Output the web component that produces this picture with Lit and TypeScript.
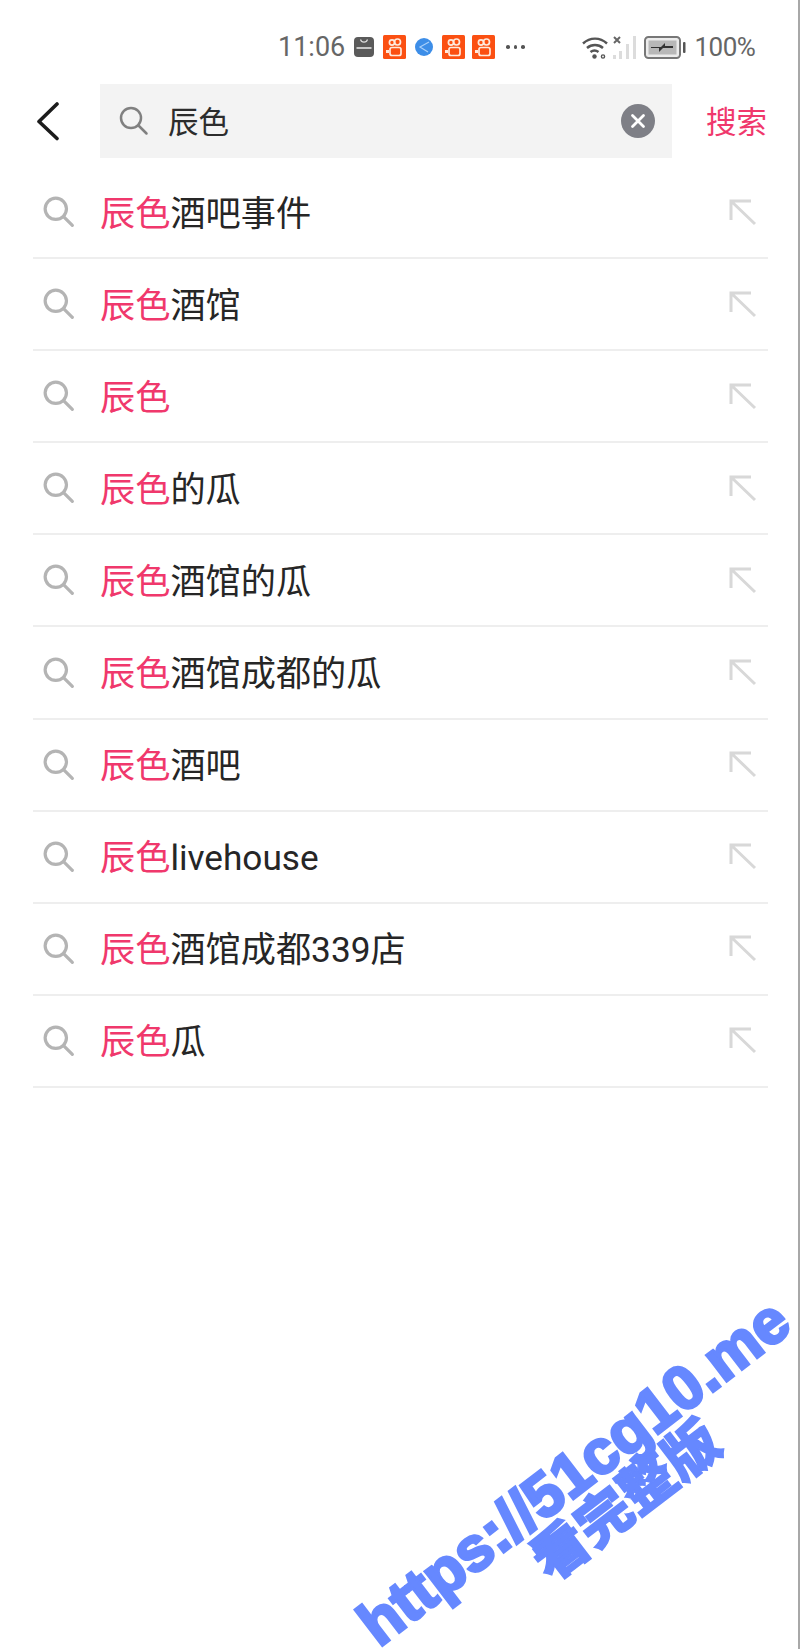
import { LitElement, html, css, svg } from 'lit';
import { customElement } from 'lit/decorators.js';

const ROWS = ['酒吧事件', '酒馆', '', '的瓜', '酒馆的瓜', '酒馆成都的瓜', '酒吧', 'livehouse', '酒馆成都339店', '瓜'];

const orangeApp = html`<svg class="orange" viewBox="0 0 23 24">
  <rect width="23" height="24" rx="1.5" fill="#fb5012" />
  <g fill="none" stroke="#ffe9dc" stroke-width="1.7">
    <circle cx="9" cy="7.500" r="2.600" /><circle cx="14.500" cy="7" r="3" />
    <rect x="7" y="12.500" width="11" height="8" rx="2" />
  </g>
  <path d="M3 15h3v3H3z" fill="#ffe9dc" />
</svg>`;

@customElement('app-root')
export class AppRoot extends LitElement {
  static styles = css`
    :host {
      display: block;
      position: relative;
      width: 800px;
      height: 1649px;
      overflow: hidden;
      background: #fff;
      font-family: 'Noto Sans CJK SC', 'Noto Sans', sans-serif;
      color: #222;
    }

    .edge {
      position: absolute;
      top: 0;
      right: 0;
      width: 2px;
      height: 100%;
      background: #a8a8a8;
    }

    .status {
      display: flex;
      align-items: center;
      height: 30px;
      padding: 32px 0 0 278px;
      color: #666;
      font-family: Roboto, sans-serif;
      font-size: 26px;
    }

    .time {
      width: 76px;
      font-size: 27px;
    }

    .store {
      width: 20px;
      height: 20px;
      margin-right: 9px;
    }

    .orange {
      width: 23px;
      height: 24px;
      margin-right: 7px;
      flex: none;
    }

    .globe {
      width: 18px;
      height: 18px;
      margin: 0 9px 0 2px;
    }

    .dots {
      display: flex;
      gap: 4px;
      margin: 0 57px 0 4px;
    }

    .dots i {
      width: 3.500px;
      height: 3.500px;
      border-radius: 50%;
      background: #555;
    }

    .wifi {
      width: 26px;
      height: 23px;
    }

    .signal {
      width: 24px;
      height: 23px;
      margin-left: 5px;
    }

    .battery {
      width: 42px;
      height: 23px;
      margin-left: 7px;
    }

    .pct {
      margin-left: 9px;
      letter-spacing: -0.5px;
    }

    .search {
      display: flex;
      align-items: center;
      margin-top: 22px;
      height: 74px;
    }

    .back {
      width: 24px;
      height: 40px;
      margin-left: 36px;
      flex: none;
    }

    .box {
      display: flex;
      align-items: center;
      box-sizing: border-box;
      width: 572px;
      height: 74px;
      margin-left: 40px;
      padding: 0 17px 0 19px;
      background: #f3f3f3;
      font-size: 30.500px;
    }

    .box .mag {
      width: 30px;
      height: 30px;
      flex: none;
    }

    .box span {
      flex: 1;
      margin-left: 19px;
      padding-bottom: 2px;
      color: #2c2c2c;
    }

    .clear {
      width: 34px;
      height: 34px;
      flex: none;
    }

    .go {
      margin-left: 34px;
      padding-bottom: 2px;
      color: #f0386c;
      font-size: 30.500px;
    }

    .list {
      margin: 9px 32px 0 33px;
    }

    .row {
      display: flex;
      align-items: center;
      box-sizing: border-box;
      height: 92.100px;
      padding: 0 11px 0 10px;
      border-bottom: 2px solid #eeeeee;
      font-family: Roboto, 'Noto Sans CJK SC', sans-serif;
      font-size: 35.200px;
    }

    .row .mag {
      width: 32px;
      height: 32px;
      flex: none;
    }

    .text {
      flex: 1;
      margin-left: 25px;
      padding-bottom: 4px;
      color: #262626;
      white-space: nowrap;
    }

    .text em {
      font-style: normal;
      color: #f0386c;
    }

    .arrow {
      width: 28px;
      height: 27px;
      flex: none;
    }

    .mark {
      position: absolute;
      color: #6688ff;
      white-space: nowrap;
    }

    .url {
      left: 270px;
      top: 1452px;
      font-family: 'Liberation Sans', sans-serif;
      font-weight: 700;
      font-size: 62px;
      line-height: 40px;
      -webkit-text-stroke: 3px #6688ff;
      transform: translateX(42px) rotate(-37.500deg);
    }

    .sub {
      left: 536px;
      top: 1536px;
      font-family: 'Noto Sans CJK SC', sans-serif;
      font-weight: 900;
      font-size: 55px;
      line-height: 56px;
      -webkit-text-stroke: 1.500px #6688ff;
      transform: rotate(-37.500deg);
      transform-origin: 0 50%;
    }
  `;

  searchIcon(color: string, weight: number) {
    return svg`
      <circle cx="12" cy="12" r="10" fill="none" stroke=${color} stroke-width=${weight} />
      <path d="M19.500 19.500l8 8" fill="none" stroke=${color} stroke-width=${weight} stroke-linecap="round" />`;
  }

  render() {
    return html`
      <div class="status">
        <span class="time">11:06</span>
        <svg class="store" viewBox="0 0 20 20">
          <rect width="20" height="20" rx="4" fill="#5a5a5a" />
          <path d="M6.500 2.500c1 3.500 6 3.500 7 0" fill="none" stroke="#ddd" stroke-width="1.200" />
          <rect x="2.500" y="10" width="15" height="2" fill="#c8c8c8" />
        </svg>
        ${orangeApp}
        <svg class="globe" viewBox="0 0 18 18">
          <circle cx="9" cy="9" r="9" fill="#3d8ee8" />
          <path d="M14 4L5 9l8 5" fill="none" stroke="#a9d0fa" stroke-width="1.200" />
        </svg>
        ${orangeApp}${orangeApp}
        <div class="dots"><i></i><i></i><i></i></div>
        <svg class="wifi" viewBox="0 0 26 23" fill="none" stroke="#555" stroke-width="2.400">
          <path d="M1 7.500c7-6.500 17-6.500 24 0M5 12c4.500-4 11.500-4 16 0M8.500 16c2.500-2 5.500-2 8 0" />
          <circle cx="12.500" cy="20.500" r="2.200" fill="#555" stroke="none" />
          <circle cx="21" cy="20.500" r="1.600" stroke-width="1.400" />
        </svg>
        <svg class="signal" viewBox="0 0 24 23">
          <path d="M1 1l6 6M7 1L1 7" stroke="#666" stroke-width="2" />
          <g fill="#dcdcdc">
            <rect x="0" y="19" width="3" height="4" /><rect x="6" y="15" width="3" height="8" />
            <rect x="13" y="8" width="3" height="15" /><rect x="20" y="0" width="3" height="23" />
          </g>
        </svg>
        <svg class="battery" viewBox="0 0 42 23">
          <rect x="1" y="1" width="35" height="21" rx="3.500" fill="#ececec" stroke="#777" stroke-width="2" />
          <rect x="4.500" y="4.500" width="28" height="14" fill="#b8b8b8" />
          <path d="M7 11h10l4-4v3h8v2H19l-4 4v-4H7z" fill="#333" />
          <rect x="39" y="6" width="2.500" height="11" rx="1" fill="#555" />
        </svg>
        <span class="pct">100%</span>
      </div>

      <div class="search">
        <svg class="back" viewBox="0 0 24 40" fill="none" stroke="#1c1c1c" stroke-width="3.600" stroke-linecap="round" stroke-linejoin="round">
          <path d="M21 3L3 20.500l18 17" />
        </svg>
        <div class="box">
          <svg class="mag" viewBox="0 0 30 30">${this.searchIcon('#808080', 2.500)}</svg>
          <span>辰色</span>
          <svg class="clear" viewBox="0 0 34 34">
            <circle cx="17" cy="17" r="17" fill="#7e7f86" />
            <path d="M11.500 11.500l11 11M22.500 11.500l-11 11" stroke="#fff" stroke-width="2.800" stroke-linecap="round" />
          </svg>
        </div>
        <span class="go">搜索</span>
      </div>

      <div class="list">
        ${ROWS.map(
          (rest) => html`
            <div class="row">
              <svg class="mag" viewBox="0 0 30 30">${this.searchIcon('#b4b4b4', 3)}</svg>
              <span class="text"><em>辰色</em>${rest}</span>
              <svg class="arrow" viewBox="0 0 28 27" fill="none" stroke="#d8d8d8" stroke-width="3">
                <path d="M2 21V2h20M2 2l24 23" />
              </svg>
            </div>
          `
        )}
      </div>

      <div class="mark url">https://51cg10.me</div>
      <div class="mark sub">看完整版</div>
      <div class="edge"></div>
    `;
  }
}
